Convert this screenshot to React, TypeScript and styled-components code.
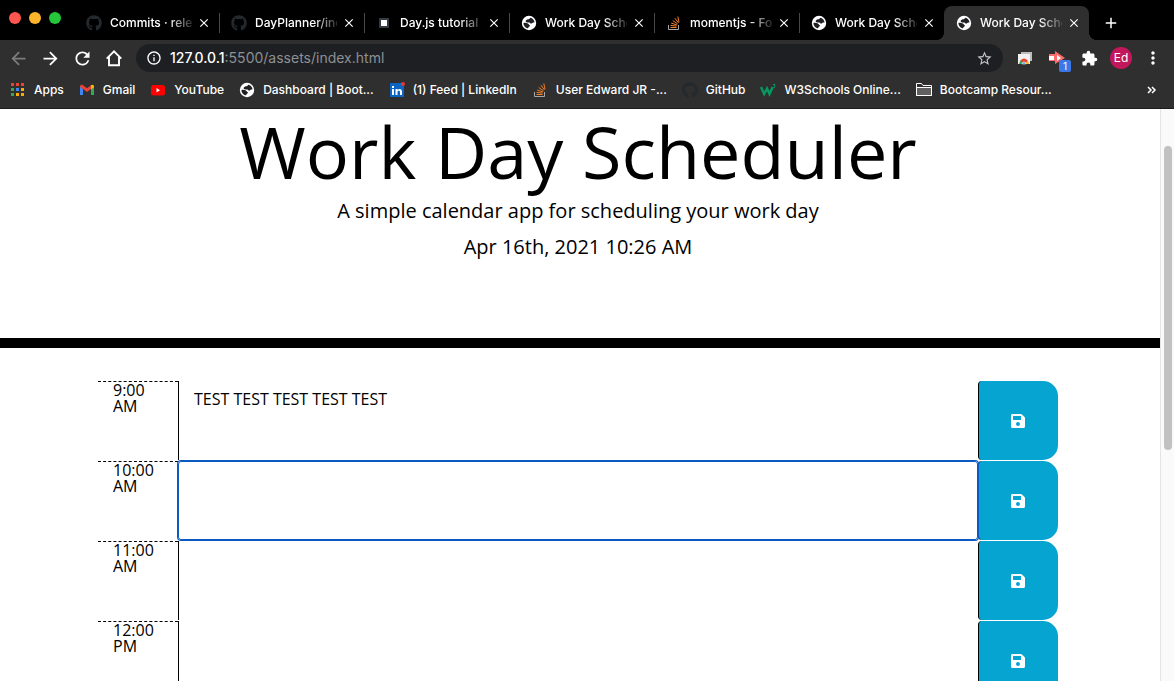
import React from 'react';
import styled, { createGlobalStyle } from 'styled-components';
import {
  MdAdd,
  MdArrowBack,
  MdArrowForward,
  MdClose,
  MdExtension,
  MdInfoOutline,
  MdMoreVert,
  MdRefresh,
  MdStarBorder,
} from 'react-icons/md';
import { FaGithub, FaSave } from 'react-icons/fa';

const uiFont = 'Inter, Roboto, "Liberation Sans", sans-serif';

const GlobalStyle = createGlobalStyle`
  * { box-sizing: border-box; }
  body { margin: 0; background: #fff; overflow: hidden; }
  button, textarea, input { font: inherit; }
`;

const Browser = styled.div`
  display: flex;
  flex-direction: column;
  height: 100vh;
  overflow: hidden;
  font-family: ${uiFont};
`;

const TabStrip = styled.div`
  display: flex;
  align-items: flex-end;
  flex: none;
  height: 40px;
  background: #000;
`;

const WindowControls = styled.div`
  display: flex;
  gap: 8px;
  width: 74px;
  height: 28px;
  padding-left: 9px;
  flex: none;
`;

const WindowDot = styled.button<{ $color: string }>`
  flex: none;
  width: 12px;
  height: 12px;
  padding: 0;
  border: 0;
  border-radius: 50%;
  background: ${(p) => p.$color};
`;

const Tab = styled.div<{ $active?: boolean; $divided?: boolean }>`
  position: relative;
  display: flex;
  align-items: center;
  flex: 0 1 145px;
  min-width: 0;
  height: 34px;
  padding: 0 8px 0 12px;
  border-radius: 8px 8px 0 0;
  background: ${(p) => (p.$active ? '#2f2f2f' : 'transparent')};

  &::before,
  &::after {
    content: '';
    display: ${(p) => (p.$active ? 'block' : 'none')};
    position: absolute;
    bottom: 0;
    width: 8px;
    height: 8px;
  }
  &::before {
    left: -8px;
    background: radial-gradient(circle at 0 0, #000 8px, #2f2f2f 8px);
  }
  &::after {
    right: -8px;
    background: radial-gradient(circle at 100% 0, #000 8px, #2f2f2f 8px);
    ${(p) =>
      p.$divided &&
      `display: block; right: -1px; bottom: 7px; width: 1px; height: 20px; background: #46484b;`}
  }
`;

const TabIcon = styled.span`
  display: flex;
  align-items: center;
  justify-content: center;
  flex: none;
  width: 16px;
  height: 16px;
  margin-right: 8px;
`;

const TabTitle = styled.span`
  flex: 1;
  min-width: 0;
  overflow: hidden;
  white-space: nowrap;
  font-size: 12px;
  line-height: 16px;
  font-weight: 500;
  color: #fff;
  mask-image: linear-gradient(to right, #000 72%, transparent 105%);
`;

const IconButton = styled.button<{ $size?: number; $color?: string }>`
  display: flex;
  align-items: center;
  justify-content: center;
  flex: none;
  width: ${(p) => p.$size ?? 32}px;
  height: ${(p) => p.$size ?? 32}px;
  padding: 0;
  border: 0;
  background: none;
  color: ${(p) => p.$color ?? '#fff'};
`;

const TabClose = styled(IconButton)`
  width: 14px;
  height: 16px;
  margin-left: 5px;
`;

const NewTab = styled(IconButton)`
  width: 44px;
  height: 34px;
`;

const Toolbar = styled.div`
  display: flex;
  align-items: center;
  flex: none;
  height: 36px;
  padding: 0 5px 0 2px;
  background: #2f2f2f;
`;

const AddressBar = styled.div`
  display: flex;
  align-items: center;
  flex: 1;
  min-width: 0;
  height: 28px;
  margin: 0 6px;
  padding: 0 9px 0 10px;
  border-radius: 14px;
  background: #1e1f22;
  color: #fff;
`;

const Address = styled.div`
  flex: 1;
  margin-left: 8px;
  font-size: 14px;
  line-height: 20px;
  color: #8d9094;
  white-space: nowrap;

  b {
    font-weight: 500;
    color: #fff;
  }
`;

const ExtensionBadge = styled.span`
  position: absolute;
  right: 2px;
  bottom: 2px;
  width: 12px;
  height: 12px;
  border-radius: 2px;
  background: #3b78e7;
  color: #fff;
  font-size: 10px;
  line-height: 12px;
`;

const ExtensionButton = styled(IconButton)`
  position: relative;
`;

const Avatar = styled.span`
  width: 22px;
  height: 22px;
  border-radius: 50%;
  background: #c2185b;
  font-size: 12px;
  line-height: 22px;
`;

const Bookmarks = styled.nav`
  display: flex;
  align-items: center;
  flex: none;
  height: 33px;
  padding: 0 14px 5px 10px;
  border-bottom: 1px solid #1c1c1c;
  background: #2f2f2f;
`;

const Bookmark = styled.a`
  display: flex;
  align-items: center;
  flex: none;
  gap: 8px;
  margin-right: 15px;
  color: #fff;
  font-size: 12px;
  line-height: 16px;
  font-weight: 500;
  text-decoration: none;
  white-space: nowrap;
`;

const Overflow = styled(IconButton)`
  width: 16px;
  margin-left: auto;
`;

const Viewport = styled.div`
  display: flex;
  flex: 1;
  min-height: 0;
  background: #fff;
`;

const Page = styled.main`
  flex: 1;
  min-width: 0;
  overflow: hidden;
  color: #000;
  font-family: 'Open Sans', 'Noto Sans', sans-serif;
  font-size: 16px;
  line-height: 16px;
`;

const Scrollbar = styled.div`
  flex: none;
  width: 14px;
  padding: 37px 2px 0 3px;
  border-left: 1px solid #e4e4e4;
  background: #fafafa;
`;

const ScrollThumb = styled.div`
  height: 304px;
  border-radius: 4px;
  background: #c1c1c1;
`;

const Header = styled.header`
  height: 239px;
  padding-right: 4px;
  border-bottom: 10px solid #000;
  text-align: center;
`;

const Title = styled.h1`
  margin: 0;
  font-size: 72px;
  line-height: 84px;
  font-weight: 400;
`;

const Lead = styled.p`
  margin: 0;
  font-size: 20px;
  line-height: 36px;
`;

const Schedule = styled.section`
  width: 100%;
  max-width: 964px;
  margin: 0 auto;
  padding: 33px 4px 0 0;
`;

const TimeBlock = styled.div`
  display: grid;
  grid-template-columns: 1fr 10fr 1fr;
  height: 80px;
`;

const Hour = styled.label`
  padding: 0 15px;
  border-top: 1px dashed #000;
`;

const Entry = styled.textarea<{ $focused?: boolean }>`
  position: relative;
  display: block;
  width: 100%;
  height: 79px;
  padding: 10px 15px;
  border: 0;
  border-left: 1px solid #000;
  background: transparent;
  line-height: 16px;
  color: #000;
  resize: none;
  outline: none;
  ${(p) =>
    p.$focused &&
    `border: 1px solid #0a5ac2; border-radius: 3px; box-shadow: 0 0 0 1px #0a5ac2;`}
`;

const SaveButton = styled.button`
  display: flex;
  align-items: center;
  justify-content: center;
  height: 79px;
  padding: 0 1px 0 0;
  border: 0;
  border-left: 1px solid #000;
  border-radius: 4px 15px 15px 4px;
  background: #06a5d1;
  color: #fff;
`;

const Globe = () => (
  <svg width="16" height="16" viewBox="0 0 16 16" aria-hidden="true">
    <circle cx="8" cy="8" r="7.2" fill="#fff" />
    <path
      d="M9.300 2.700C8.600 3.900 7.800 4 6.700 4.300 5.300 4.700 4.500 5.600 4.700 6.600c.200.900 1.300.9 2.500.9 1.500 0 2.100.4 2.300 1.100h1.400c.5-.9 1.200-1.200 2.600-1.100C13.400 5.100 11.700 3.200 9.300 2.700z"
      fill="#202124"
    />
    <path
      d="M2.400 8c1.500-.3 3.300-.1 4.500.5 1 .5.9 1.500 2 1.700.2 1.300-.9 1.300-1.300 2-.3.500-.4.900-1.400 1.100C4 12.600 2.400 10.600 2.400 8z"
      fill="#202124"
    />
  </svg>
);

const HomeIcon = () => (
  <svg width="20" height="20" viewBox="0 0 20 20" fill="none" aria-hidden="true">
    <path d="M2.700 10.700 10 3.400l7.300 7.300M5 9v8.200h10V9" stroke="#fff" strokeWidth="1.900" />
  </svg>
);

const ChevronsIcon = () => (
  <svg width="10" height="8" viewBox="0 0 10 8" fill="none" aria-hidden="true">
    <path d="M1 1l3 3-3 3M5 1l3 3-3 3" stroke="#fff" strokeWidth="1.500" />
  </svg>
);

const StackIcon = () => (
  <svg width="16" height="16" viewBox="0 0 16 16" fill="none" aria-hidden="true">
    <path d="M2.500 10v4.500h10V10" stroke="#a6a8ab" />
    <path
      d="M4.500 12.500h6M4.600 10.400l6 .7M5.200 8.100l5.700 1.800M6.700 5.500l4.900 3.400M8.900 3.200l3.600 4.700M11.800 1.500l1.200 5.700"
      stroke="#f48024"
    />
  </svg>
);

const SquareIcon = () => (
  <svg width="10" height="10" viewBox="0 0 10 10" aria-hidden="true">
    <rect width="10" height="10" fill="#343a44" />
    <rect x="2" y="2" width="6" height="6" fill="#fff" />
  </svg>
);

const appColors = [
  '#ea4335', '#ea4335', '#ea4335',
  '#34a853', '#4285f4', '#fbab05',
  '#34a853', '#fbab05', '#fbab05',
];

const AppsIcon = () => (
  <svg width="16" height="16" viewBox="0 0 16 16" aria-hidden="true">
    {appColors.map((fill, i) => (
      <rect key={i} x={1 + (i % 3) * 5} y={1 + Math.floor(i / 3) * 5} width="3" height="3" fill={fill} />
    ))}
  </svg>
);

const GmailIcon = () => (
  <svg width="16" height="16" viewBox="0 0 16 16" aria-hidden="true">
    <path d="M1 4v9h3V7z" fill="#4285f4" />
    <path d="M15 4v9h-3V7z" fill="#34a853" />
    <path d="M1 4.500C1 2.700 3 2.300 4 3.200l4 3 4-3v3.900l-4 3-4-3-3-2.200z" fill="#ea4335" />
    <path d="M12 3.200c1.400-1.200 3-.3 3 1.300v.800l-3 2.200z" fill="#fbbc04" />
  </svg>
);

const YouTubeIcon = () => (
  <svg width="16" height="16" viewBox="0 0 16 16" aria-hidden="true">
    <rect x="1" y="3" width="14" height="10.500" rx="2.500" fill="#f00" />
    <path d="M6.500 6v4.500l3.500-2.200z" fill="#fff" />
  </svg>
);

const LinkedInIcon = () => (
  <svg width="16" height="16" viewBox="0 0 16 16" aria-hidden="true">
    <rect x="1" y="1" width="14" height="14" fill="#0a66c2" />
    <path
      d="M3 7h2v6H3zM3 4h2v2H3zM6.500 7h2v1c1-1.600 4.500-1.500 4.500 1.500V13h-2v-3c0-1.800-2.500-1.800-2.500 0v3h-2z"
      fill="#fff"
    />
    <circle cx="14" cy="2" r="2" fill="#e53935" />
  </svg>
);

const W3Icon = () => (
  <svg width="16" height="16" viewBox="0 0 16 16" fill="none" aria-hidden="true">
    <path d="M1 5l3.200 7L7 6.500 9.500 12l3.200-7" stroke="#059862" strokeWidth="2.400" />
    <path d="M13 2.500h2l-1 1.500c2 0 1 2.500-1 1.500" stroke="#059862" />
  </svg>
);

const FolderIcon = () => (
  <svg width="16" height="16" viewBox="0 0 16 16" aria-hidden="true">
    <path d="M.5 13.500v-12h5l1.500 2h8.500v10z" fill="#2f2f2f" stroke="#fff" />
    <path d="M.5 5.500h15v8H.5z" fill="#606060" stroke="#fff" />
  </svg>
);

const StoreIcon = () => (
  <svg width="16" height="16" viewBox="0 0 16 16" aria-hidden="true">
    <path d="M4 2h11v9h-2V4H4z" fill="#bdbdbd" />
    <rect x="1" y="4" width="12" height="10" fill="#f1f1f1" />
    <path d="M2.500 14a4.500 5.500 0 0 1 9 0z" fill="#ea4335" />
    <path d="M2.500 14c0-1.500.5-2.800 1.400-3.800L7 14z" fill="#34a853" />
    <path d="M11.500 14c0-1.500-.4-2-.9-2.900L7 14z" fill="#fbbc04" />
    <path d="M5 14a2 2 0 0 1 4 0z" fill="#4285f4" stroke="#fff" strokeWidth=".6" />
  </svg>
);

const PlayIcon = () => (
  <svg width="18" height="16" viewBox="0 0 18 16" aria-hidden="true">
    <path d="M1 4h6V1l10 7-10 6v-3H1z" fill="#fa6b6b" />
    <path d="M1 6h5v4H1zM9 5l4 3-4 3z" fill="#fff" />
  </svg>
);

const github = <FaGithub size={16} color="#24292e" />;

const tabs = [
  { icon: github, title: 'Commits · release' },
  { icon: github, title: 'DayPlanner/index.html' },
  { icon: <SquareIcon />, title: 'Day.js tutorial - date' },
  { icon: <Globe />, title: 'Work Day Scheduler' },
  { icon: <StackIcon />, title: 'momentjs - Format' },
  { icon: <Globe />, title: 'Work Day Scheduler' },
  { icon: <Globe />, title: 'Work Day Scheduler' },
];

const bookmarks = [
  { icon: <AppsIcon />, title: 'Apps' },
  { icon: <GmailIcon />, title: 'Gmail' },
  { icon: <YouTubeIcon />, title: 'YouTube' },
  { icon: <Globe />, title: 'Dashboard | Boot...' },
  { icon: <LinkedInIcon />, title: '(1) Feed | LinkedIn' },
  { icon: <StackIcon />, title: 'User Edward JR -...' },
  { icon: github, title: 'GitHub' },
  { icon: <W3Icon />, title: 'W3Schools Online...' },
  { icon: <FolderIcon />, title: 'Bootcamp Resour...' },
];

const blocks = [
  { hour: '9:00 AM', text: 'TEST TEST TEST TEST TEST' },
  { hour: '10:00 AM', text: '', focused: true },
  { hour: '11:00 AM', text: '' },
  { hour: '12:00 PM', text: '' },
];

export default function App() {
  return (
    <Browser>
      <GlobalStyle />
      <TabStrip>
        <WindowControls>
          <WindowDot $color="#ff5650" aria-label="Close window" />
          <WindowDot $color="#ffb52b" aria-label="Minimize window" />
          <WindowDot $color="#25c639" aria-label="Zoom window" />
        </WindowControls>
        {tabs.map((tab, i) => (
          <Tab key={i} $active={i === tabs.length - 1} $divided={i < tabs.length - 2}>
            <TabIcon>{tab.icon}</TabIcon>
            <TabTitle>{tab.title}</TabTitle>
            <TabClose aria-label="Close tab">
              <MdClose size={14} />
            </TabClose>
          </Tab>
        ))}
        <NewTab aria-label="New tab">
          <MdAdd size={18} />
        </NewTab>
      </TabStrip>
      <Toolbar>
        <IconButton aria-label="Back" $color="#7d7d7d">
          <MdArrowBack size={21} />
        </IconButton>
        <IconButton aria-label="Forward">
          <MdArrowForward size={21} />
        </IconButton>
        <IconButton aria-label="Reload">
          <MdRefresh size={21} />
        </IconButton>
        <IconButton aria-label="Home">
          <HomeIcon />
        </IconButton>
        <AddressBar>
          <MdInfoOutline size={16} />
          <Address>
            <b>127.0.0.1</b>:5500/assets/index.html
          </Address>
          <IconButton $size={20} $color="#c4c4c4" aria-label="Bookmark this page">
            <MdStarBorder size={17} />
          </IconButton>
        </AddressBar>
        <IconButton aria-label="Web store">
          <StoreIcon />
        </IconButton>
        <ExtensionButton aria-label="Recorder">
          <PlayIcon />
          <ExtensionBadge>1</ExtensionBadge>
        </ExtensionButton>
        <IconButton aria-label="Extensions">
          <MdExtension size={17} />
        </IconButton>
        <IconButton aria-label="Profile">
          <Avatar>Ed</Avatar>
        </IconButton>
        <IconButton aria-label="Menu">
          <MdMoreVert size={20} />
        </IconButton>
      </Toolbar>
      <Bookmarks>
        {bookmarks.map((bookmark) => (
          <Bookmark key={bookmark.title} href="#">
            {bookmark.icon}
            {bookmark.title}
          </Bookmark>
        ))}
        <Overflow aria-label="More bookmarks">
          <ChevronsIcon />
        </Overflow>
      </Bookmarks>
      <Viewport>
        <Page>
          <Header>
            <Title>Work Day Scheduler</Title>
            <Lead>A simple calendar app for scheduling your work day</Lead>
            <Lead>Apr 16th, 2021 10:26 AM</Lead>
          </Header>
          <Schedule>
            {blocks.map((block, i) => (
              <TimeBlock key={block.hour}>
                <Hour htmlFor={`entry-${i}`}>{block.hour}</Hour>
                <Entry id={`entry-${i}`} $focused={block.focused} defaultValue={block.text} />
                <SaveButton aria-label={`Save ${block.hour}`}>
                  <FaSave size={16} />
                </SaveButton>
              </TimeBlock>
            ))}
          </Schedule>
        </Page>
        <Scrollbar>
          <ScrollThumb />
        </Scrollbar>
      </Viewport>
    </Browser>
  );
}
